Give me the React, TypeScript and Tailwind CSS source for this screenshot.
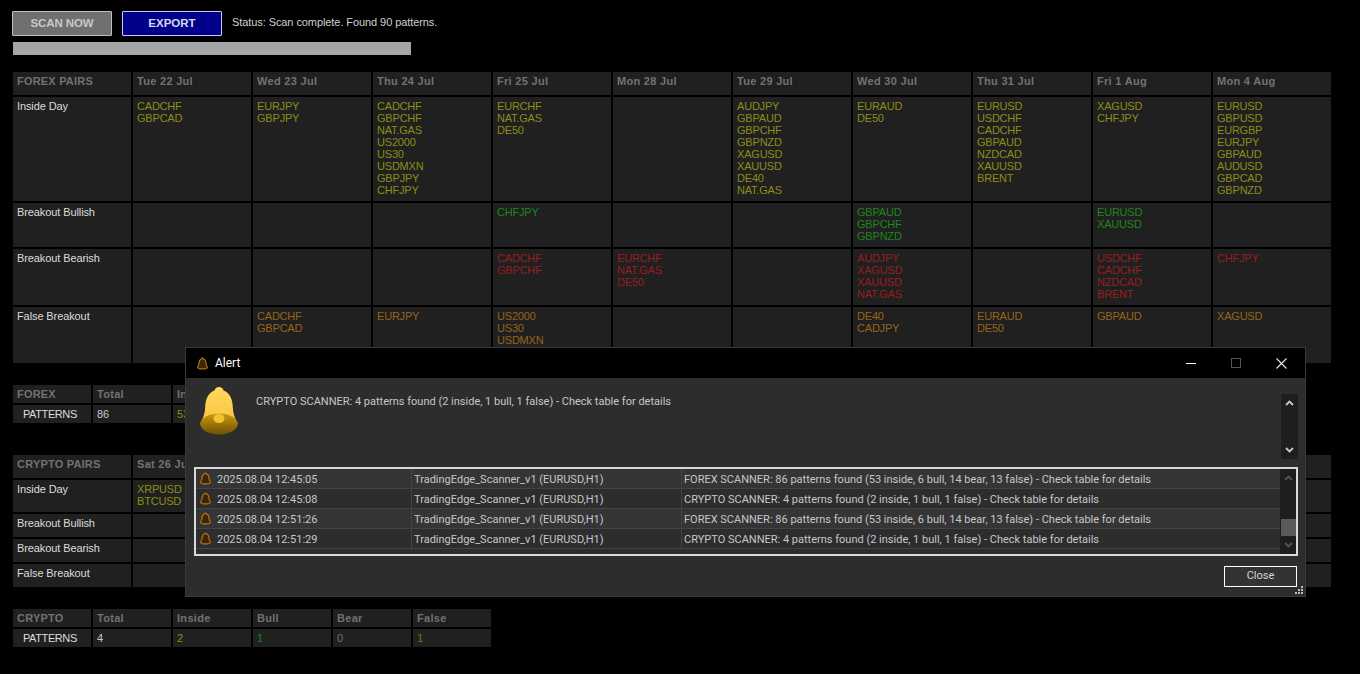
import React from "react";

const days = ["Tue 22 Jul","Wed 23 Jul","Thu 24 Jul","Fri 25 Jul","Mon 28 Jul","Tue 29 Jul","Wed 30 Jul","Thu 31 Jul","Fri 1 Aug","Mon 4 Aug"];
const cdays = ["Sat 26 Jul","Sun 27 Jul","Mon 28 Jul","Tue 29 Jul","Wed 30 Jul","Thu 31 Jul","Fri 1 Aug","Sat 2 Aug","Sun 3 Aug","Mon 4 Aug"];
const Y = "text-[#8c8c18]", G = "text-[#1f851f]", R = "text-[#961e1e]", O = "text-[#966418]";

type Row = { label: string; h: string; color: string; cells: string[][] };
const forex: Row[] = [
  { label: "Inside Day", h: "h-[104px]", color: Y, cells: [
    ["CADCHF","GBPCAD"],["EURJPY","GBPJPY"],["CADCHF","GBPCHF","NAT.GAS","US2000","US30","USDMXN","GBPJPY","CHFJPY"],["EURCHF","NAT.GAS","DE50"],[],
    ["AUDJPY","GBPAUD","GBPCHF","GBPNZD","XAGUSD","XAUUSD","DE40","NAT.GAS"],["EURAUD","DE50"],["EURUSD","USDCHF","CADCHF","GBPAUD","NZDCAD","XAUUSD","BRENT"],["XAGUSD","CHFJPY"],
    ["EURUSD","GBPUSD","EURGBP","EURJPY","GBPAUD","AUDUSD","GBPCAD","GBPNZD"]] },
  { label: "Breakout Bullish", h: "h-[44px]", color: G, cells: [[],[],[],["CHFJPY"],[],[],["GBPAUD","GBPCHF","GBPNZD"],[],["EURUSD","XAUUSD"],[]] },
  { label: "Breakout Bearish", h: "h-[56px]", color: R, cells: [[],[],[],["CADCHF","GBPCHF"],["EURCHF","NAT.GAS","DE50"],[],["AUDJPY","XAGUSD","XAUUSD","NAT.GAS"],[],["USDCHF","CADCHF","NZDCAD","BRENT"],["CHFJPY"]] },
  { label: "False Breakout", h: "h-[56px]", color: O, cells: [[],["CADCHF","GBPCAD"],["EURJPY"],["US2000","US30","USDMXN"],[],[],["DE40","CADJPY"],["EURAUD","DE50"],["GBPAUD"],["XAGUSD"]] },
];
const crypto: Row[] = [
  { label: "Inside Day", h: "h-[32px]", color: Y, cells: [["XRPUSD","BTCUSD"],[],[],[],[],[],[],[],[],[]] },
  { label: "Breakout Bullish", h: "h-[23px]", color: G, cells: Array.from({ length: 10 }, () => []) },
  { label: "Breakout Bearish", h: "h-[23px]", color: R, cells: Array.from({ length: 10 }, () => []) },
  { label: "False Breakout", h: "h-[23px]", color: O, cells: Array.from({ length: 10 }, () => []) },
];

function Matrix({ title, heads, rows }: { title: string; heads: string[]; rows: Row[] }) {
  return (
    <div className="grid grid-cols-[repeat(11,118px)] gap-[2px] text-[11px] leading-[12px]">
      <div className="h-[23px] bg-[#202020] px-1 pt-[3px] font-bold tracking-[0.2px] text-[#727272]">{title}</div>
      {heads.map((d) => (
        <div key={d} className="h-[23px] bg-[#202020] px-1 pt-[3px] font-bold tracking-[0.3px] text-[#727272]">{d}</div>
      ))}
      {rows.map((r) => (
        <React.Fragment key={r.label}>
          <div className={`${r.h} bg-[#202020] px-1 pt-[3px] tracking-[-0.1px] text-[#dcdcdc]`}>{r.label}</div>
          {r.cells.map((c, i) => (
            <div key={i} className={`${r.h} overflow-hidden bg-[#202020] px-1 pt-[3px] tracking-[-0.2px] ${r.color}`}>
              {c.map((s) => <div key={s}>{s}</div>)}
            </div>
          ))}
        </React.Fragment>
      ))}
    </div>
  );
}

function Summary({ title, heads, vals }: { title: string; heads: string[]; vals: string[] }) {
  const cols = ["text-[#c8c8c8]", Y, G, "text-[#727272]", O];
  return (
    <div className="grid grid-cols-[repeat(6,78px)] gap-[2px] text-[11px] leading-[12px]">
      <div className="h-[18px] bg-[#202020] px-1 pt-[3px] font-bold tracking-[0.2px] text-[#727272]">{title}</div>
      {heads.map((h, i) => <div key={i} className="h-[18px] bg-[#202020] px-1 pt-[3px] font-bold tracking-[0.3px] text-[#727272]">{h}</div>)}
      <div className="h-[18px] bg-[#202020] pl-[10px] pt-[3px] tracking-[-0.4px] text-[#dcdcdc]">PATTERNS</div>
      {vals.map((v, i) => <div key={i} className={`h-[18px] bg-[#202020] px-1 pt-[3px] ${cols[i]}`}>{v}</div>)}
    </div>
  );
}

function SmallBell() {
  return (
    <svg width="11" height="13" viewBox="0 0 12 14">
      <path d="M6 1.2c.7 0 1 .4 1.1.9C8.8 2.600 9.600 4 9.700 6c.1 2.200.7 3.500 1.300 4.300.5.800.1 1.900-1.300 2.200-2.300.4-5.100.4-7.400 0C.9 12.200.5 11.100 1 10.300 1.600 9.500 2.200 8.200 2.300 6c.1-2 .9-3.400 2.600-3.900.1-.5.400-.9 1.100-.9z" fill="#3c2608" stroke="#b87010" strokeWidth="1.300" />
    </svg>
  );
}

function BigBell() {
  return (
    <svg width="38" height="48" viewBox="0 0 38 48">
      <defs>
        <linearGradient id="bellTop" x1="0" y1="0" x2="0" y2="1">
          <stop offset="0" stopColor="#ffd75e" />
          <stop offset="1" stopColor="#f7c53c" />
        </linearGradient>
        <linearGradient id="bellIn" x1="0" y1="0" x2="0" y2="1">
          <stop offset="0" stopColor="#c99a10" />
          <stop offset="1" stopColor="#6f5004" />
        </linearGradient>
      </defs>
      <path d="M19 0c2.500 0 4 1.500 4.500 3.500C30 6 32.500 12 32.800 20c.2 6 1.700 10 4 14.500C38 37 37.500 38 36.500 38h-35C.5 38 0 37 1.200 34.500c2.300-4.500 3.800-8.500 4-14.500C5.500 12 8 6 14.500 3.500 15 1.500 16.500 0 19 0z" fill="url(#bellTop)" />
      <ellipse cx="19" cy="37" rx="18.600" ry="10.500" fill="url(#bellIn)" />
      <ellipse cx="19" cy="31.500" rx="5.500" ry="4.500" fill="#f6c235" />
    </svg>
  );
}

const log = [
  ["2025.08.04 12:45:05","FOREX SCANNER: 86 patterns found (53 inside, 6 bull, 14 bear, 13 false) - Check table for details"],
  ["2025.08.04 12:45:08","CRYPTO SCANNER: 4 patterns found (2 inside, 1 bull, 1 false) - Check table for details"],
  ["2025.08.04 12:51:26","FOREX SCANNER: 86 patterns found (53 inside, 6 bull, 14 bear, 13 false) - Check table for details"],
  ["2025.08.04 12:51:29","CRYPTO SCANNER: 4 patterns found (2 inside, 1 bull, 1 false) - Check table for details"],
];

function Chevron({ up, color }: { up?: boolean; color: string }) {
  return (
    <svg width="9" height="6" viewBox="0 0 9 6">
      <path d={up ? "M1 5 L4.500 1.500 L8 5" : "M1 1 L4.500 4.500 L8 1"} fill="none" stroke={color} strokeWidth="1.800" />
    </svg>
  );
}

function Dialog() {
  return (
    <div className="absolute left-[185px] top-[347px] flex h-[250px] w-[1121px] flex-col border border-[#3a3a3a] bg-[#2d2d2d] font-['Roboto','Noto_Sans',sans-serif] text-[11px] text-[#c4c8cc]">
      <div className="flex h-[30px] shrink-0 items-center bg-black pl-[11px]">
        <SmallBell />
        <span className="ml-[7px] text-[12px] text-white">Alert</span>
        <div className="ml-auto flex items-center">
          <div className="h-[1px] w-[10px] bg-white" />
          <div className="ml-[35px] h-[10px] w-[10px] border border-[#555]" />
          <svg className="ml-[35px] mr-[18px]" width="11" height="11" viewBox="0 0 11 11">
            <path d="M.5.5 10.500 10.500M10.500.5.500 10.500" stroke="#e8e8e8" strokeWidth="1.100" />
          </svg>
        </div>
      </div>
      <div className="relative flex h-[89px] shrink-0 pl-[14px] pt-[9px]">
        <BigBell />
        <div className="ml-[18px] mt-[7px]">CRYPTO SCANNER: 4 patterns found (2 inside, 1 bull, 1 false) - Check table for details</div>
        <div className="absolute right-[7px] top-[16px] flex h-[65px] w-[17px] flex-col items-center justify-between bg-[#1e1e1e] py-[6px]">
          <Chevron up color="#c8c8c8" />
          <Chevron color="#c8c8c8" />
        </div>
      </div>
      <div className="ml-[8px] mr-[7px] flex h-[89px] shrink-0 border-2 border-[#d8d8d8] bg-[#2d2d2d]">
        <div className="flex-1">
          {log.map(([t, m], i) => (
            <div key={t} className={`flex h-[20px] border-b border-[#444] ${i % 2 === 0 ? "bg-[#353535]" : "bg-[#2d2d2d]"}`}>
              <div className="flex w-[216px] items-center border-r border-[#444] pl-[4px]">
                <SmallBell />
                <span className="ml-[6px] pt-[3px]">{t}</span>
              </div>
              <div className="flex w-[270px] items-center border-r border-[#444] pl-[2px] pt-[3px]">TradingEdge_Scanner_v1 (EURUSD,H1)</div>
              <div className="flex items-center pl-[2px] pt-[3px]">{m}</div>
            </div>
          ))}
        </div>
        <div className="flex w-[16px] flex-col items-center bg-[#1e1e1e] py-[6px]">
          <Chevron up color="#555" />
          <div className="mt-auto mb-[6px] h-[17px] w-[15px] bg-[#5a5a5a]" />
          <Chevron color="#555" />
        </div>
      </div>
      <div className="relative flex-1">
        <button className="absolute right-[8px] top-[10px] h-[21px] w-[73px] border border-white bg-[#333] text-[#d0d4d8]">Close</button>
        <svg className="absolute bottom-[1px] right-[1px]" width="9" height="9" viewBox="0 0 9 9" fill="#bbb">
          <rect x="6" y="0" width="2" height="2" /><rect x="3" y="3" width="2" height="2" /><rect x="6" y="3" width="2" height="2" />
          <rect x="0" y="6" width="2" height="2" /><rect x="3" y="6" width="2" height="2" /><rect x="6" y="6" width="2" height="2" />
        </svg>
      </div>
    </div>
  );
}

export default function App() {
  return (
    <div className="relative h-[674px] w-[1360px] overflow-hidden bg-black pl-[13px] pt-[11px] font-['Liberation_Sans',Arial,sans-serif]">
      <div className="-ml-[1px] flex items-center">
        <button className="h-[25px] w-[100px] rounded-[1px] border border-[#c0c0c0] bg-[#707070] text-[11.5px] font-bold tracking-[-0.1px] text-[#c8c8c8]">SCAN NOW</button>
        <button className="ml-[10px] h-[25px] w-[100px] rounded-[1px] border border-[#c8c8ff] bg-[#00008b] text-[11.5px] font-bold text-[#d8d8f0]">EXPORT</button>
        <span className="relative -top-[1px] ml-[10px] text-[11px] tracking-[-0.08px] text-[#d0d0d0]">Status: Scan complete. Found 90 patterns.</span>
      </div>
      <div className="mt-[6px] h-[13px] w-[398px] bg-[#a6a6a6]" />
      <div className="mt-[17px]"><Matrix title="FOREX PAIRS" heads={days} rows={forex} /></div>
      <div className="mt-[22px]"><Summary title="FOREX" heads={["Total","Inside","","",""]} vals={["86","53","","",""]} /></div>
      <div className="mt-[32px]"><Matrix title="CRYPTO PAIRS" heads={cdays} rows={crypto} /></div>
      <div className="mt-[22px]"><Summary title="CRYPTO" heads={["Total","Inside","Bull","Bear","False"]} vals={["4","2","1","0","1"]} /></div>
      <Dialog />
    </div>
  );
}
